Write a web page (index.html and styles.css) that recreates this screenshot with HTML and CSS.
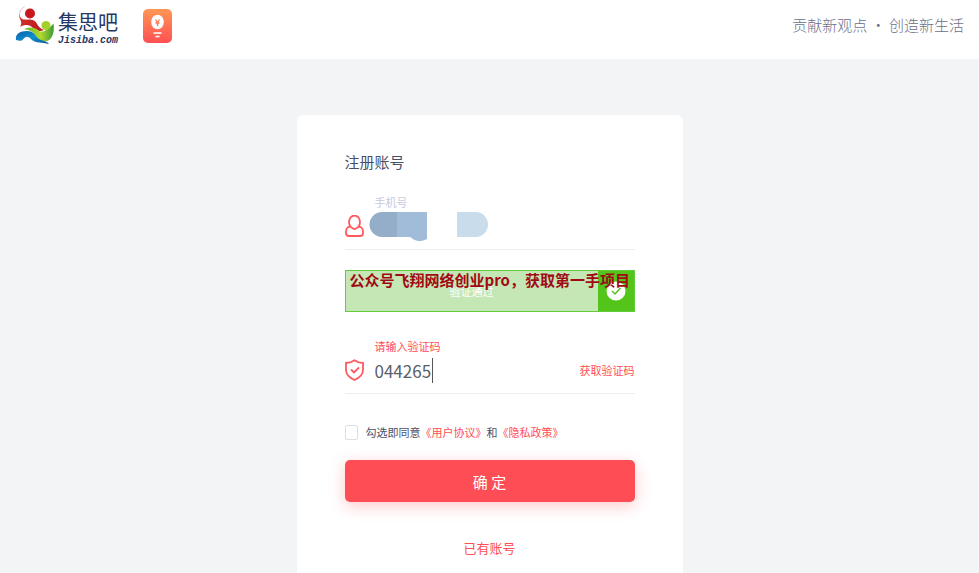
FILE: index.html
```html
<!DOCTYPE html>
<html lang="zh-CN">
<head>
  <meta charset="UTF-8">
  <meta name="viewport" content="width=device-width, initial-scale=1.0">
  <title>注册账号 - 集思吧</title>
  <link rel="stylesheet" href="styles.css">
</head>
<body>
  <header class="header">
    <a class="logo" href="#" aria-label="集思吧 Jisiba.com">
      <svg class="logo-mark" viewBox="0 0 39 40" width="39" height="40" aria-hidden="true">
        <defs>
          <linearGradient id="wave" x1="0" x2="1" y1="0" y2="1">
            <stop offset="0" stop-color="#0a5fa8"/>
            <stop offset=".5" stop-color="#1090d0"/>
            <stop offset="1" stop-color="#075292"/>
          </linearGradient>
          <linearGradient id="leaf" x1="0" x2="1" y1="0" y2="0">
            <stop offset="0" stop-color="#5cb531"/>
            <stop offset=".55" stop-color="#b4d92c"/>
            <stop offset="1" stop-color="#3d9c35"/>
          </linearGradient>
          <linearGradient id="body-red" x1="0" x2="1" y1="0" y2="1">
            <stop offset="0" stop-color="#e03a32"/>
            <stop offset="1" stop-color="#b3161b"/>
          </linearGradient>
        </defs>
        <path fill="url(#body-red)" d="M11 1C5 4 3 9 6 13c3 3 9 .5 13 2.500 4 2.500 3 7 10 9.500-4 2-8 1-11-2-3-3.500-8-4-13-1 1-2 2-4 .5-7C2.500 9 5 3 11 1z"/>
        <circle cx="15" cy="8.500" r="5" fill="#c9191f"/>
        <path fill="url(#leaf)" d="M9 24c5-2.500 11-2 14 1 4 4 10 0 15.500-6.500C39.500 26 38 34 32 36c-6 1-9-2-12-6-3-4-6-5-11-6z"/>
        <path fill="url(#wave)" d="M1 35c-1-6 4-9 11-9 8 0 8 6 13 8.500 3 1.500 7 1.500 9 4.500-7-2-13-.5-17-4-3-3-5-4-7-2.500C7 34.500 8 37 1 35z"/>
        <circle cx="31" cy="20.500" r="4.500" fill="#a5d02c"/>
      </svg>
      <span class="logo-text">
        <span class="logo-name">集思吧</span>
        <span class="logo-domain">Jisiba.com</span>
      </span>
    </a>
    <a class="idea" href="#" aria-label="创意">
      <svg viewBox="0 0 29 34" width="29" height="34" aria-hidden="true">
        <ellipse cx="14.500" cy="13" rx="6.300" ry="7.300" fill="#fff"/>
        <path d="M12.500 10.500l2 3 2-3M14.500 13.500V17M12.500 14h4" fill="none" stroke="#ff7a52" stroke-width="1.300"/>
        <path d="M10.500 24h8" stroke="#fff" stroke-width="1.600"/>
        <path d="M12.500 27.500h4" stroke="#fff" stroke-width="1.600"/>
      </svg>
    </a>
    <p class="slogan">贡献新观点 · 创造新生活</p>
  </header>

  <main class="main">
    <form class="card">
      <h1 class="title">注册账号</h1>

      <div class="field">
        <label class="field-label muted" for="phone">手机号</label>
        <div class="field-row">
          <svg class="field-icon" viewBox="0 0 19 22" width="19" height="22" aria-hidden="true">
            <path d="M5.500 11.500A5.500 6.500 0 1 1 13.500 11.500C16 11.500 18 13.500 18 16.500v1.500q0 3-3 3H4q-3 0-3-3v-1.500C1 13.500 3 11.500 5.500 11.500zM5.500 11.500Q9.500 16.500 13.500 11.500"/>
          </svg>
          <input class="field-input" type="tel" id="phone">
          <!-- masked phone number -->
          <svg class="mask" viewBox="0 0 120 29" width="120" height="29" aria-hidden="true">
            <path fill="#94aeca" d="M28 0H13a12.500 12.500 0 0 0 0 25h15z"/>
            <path fill="#a1bcd9" d="M28 0h30v27q-9 5-17-2H28z"/>
            <path fill="#c9dceb" d="M88 0h19a12 12.500 0 0 1 0 25H88z"/>
          </svg>
        </div>
      </div>

      <div class="captcha">
        <span class="captcha-text">验证通过</span>
        <span class="captcha-done">
          <svg viewBox="0 0 20 20" width="20" height="20" aria-hidden="true">
            <circle cx="10" cy="10" r="9.500" fill="#fff"/>
            <path d="M6 10l3 3 5.500-6" fill="none" stroke="#52c41a" stroke-width="1.500"/>
          </svg>
        </span>
        <strong class="notice">公众号飞翔网络创业pro，获取第一手项目</strong>
      </div>

      <div class="field">
        <label class="field-label" for="code">请输入验证码</label>
        <div class="field-row">
          <svg class="field-icon" viewBox="0 0 19 22" width="19" height="22" aria-hidden="true">
            <path d="M9.500 1.300Q13 4 18 4v7c0 5-4 8-8.500 10C5 19 1 16 1 11V4q5 0 8.500-2.700z"/>
            <path d="M6 10.500l3 3 5-5"/>
          </svg>
          <input class="field-input code-input" type="text" id="code" value="044265">
          <button class="send-code" type="button">获取验证码</button>
        </div>
      </div>

      <div class="agree">
        <input class="agree-box" type="checkbox" id="agree">
        <label for="agree">勾选即同意<a href="#">《用户协议》</a>和<a href="#">《隐私政策》</a></label>
      </div>

      <button class="submit" type="submit">确 定</button>
      <a class="login-link" href="#">已有账号</a>
    </form>
  </main>
</body>
</html>
```

FILE: styles.css
```css
* {
  box-sizing: border-box;
}

body {
  margin: 0;
  min-height: 100vh;
  display: flex;
  flex-direction: column;
  background-color: #f3f4f6;
  color: #4a4f68;
  font-family: "Noto Sans CJK SC", sans-serif;
  font-size: 11px;
}

a {
  color: #ff4d55;
  text-decoration: none;
}

input,
button {
  font-family: inherit;
  padding: 0;
  border: none;
  background: none;
}

/* Header */
.header {
  display: flex;
  align-items: flex-start;
  height: 59px;
  padding: 5px 15px;
  background-color: #fff;
}

.logo {
  display: flex;
  gap: 4px;
  color: #263765;
}

.logo-text {
  display: flex;
  flex-direction: column;
  padding-top: 4px;
}

.logo-name {
  font-size: 20px;
  line-height: 25px;
}

.logo-domain {
  font-family: "Liberation Mono", monospace;
  font-size: 10px;
  font-style: italic;
  font-weight: bold;
  line-height: 14px;
}

.idea {
  height: 34px;
  margin-top: 4px;
  margin-left: 25px;
  border-radius: 5px;
  background: linear-gradient(#ff9756, #ff5053);
}

.slogan {
  margin: 8px 0 0 auto;
  color: #6b7089;
  font-size: 15px;
  font-weight: 300;
  line-height: 24px;
}

/* Register card */
.main {
  flex: 1;
  display: flex;
  justify-content: center;
  padding-top: 56px;
}

.card {
  width: 386px;
  max-width: 100%;
  padding: 36px 48px 14px;
  display: flex;
  flex-direction: column;
  background-color: #fff;
  border-radius: 6px 6px 0 0;
}

.title {
  margin: 0 0 21px;
  font-size: 15px;
  font-weight: 400;
  line-height: 22px;
}

.field {
  padding-bottom: 7px;
  border-bottom: 1px solid #eeeef2;
}

.field-label {
  display: block;
  padding-left: 30px;
  color: #ff4d55;
  line-height: 16px;
}

.field-label.muted {
  color: #c9c9da;
}

.field-row {
  position: relative;
  display: flex;
  align-items: center;
  gap: 11px;
  height: 32px;
}

.field-icon {
  fill: none;
  stroke: #ff5a60;
  stroke-width: 1.8;
}

.field-input {
  flex: 1;
  min-width: 0;
  height: 25px;
  color: #5c6068;
  font-size: 17px;
  outline: none;
}

.code-input {
  flex: none;
  width: 58px;
  border-right: 1px solid #555;
}

.mask {
  position: absolute;
  left: 24px;
  top: 2px;
}

.send-code {
  margin-left: auto;
  color: #ff4d55;
  font-size: 11px;
  cursor: pointer;
}

/* Slider captcha, passed state */
.captcha {
  position: relative;
  display: flex;
  height: 42px;
  margin: 20px 0 26px;
  border: 1px solid #63cc3c;
  background-color: #c5e6b5;
}

.captcha-text {
  flex: 1;
  color: #fff;
  line-height: 40px;
  text-align: center;
}

.captcha-done {
  width: 36px;
  display: flex;
  align-items: center;
  justify-content: center;
  background-color: #52c41a;
}

.notice {
  position: absolute;
  top: 0;
  left: 4px;
  color: #a00a14;
  font-size: 15px;
  line-height: 18px;
  white-space: nowrap;
}

.agree {
  display: flex;
  align-items: center;
  gap: 8px;
  margin: 28px 0 18px;
  line-height: 20px;
}

.agree-box {
  appearance: none;
  width: 13px;
  height: 15px;
  margin: 0;
  border: 1px solid #dcdde6;
  border-radius: 2px;
}

.agree-box:checked {
  background-color: #ff4d55;
}

.submit {
  height: 42px;
  border-radius: 5px;
  background-color: #ff4d55;
  box-shadow: 0 4px 16px rgba(255, 77, 85, 0.3);
  color: #fff;
  font-size: 15px;
  cursor: pointer;
}

.login-link {
  align-self: center;
  margin-top: 36px;
  font-size: 13px;
  line-height: 20px;
}
```
